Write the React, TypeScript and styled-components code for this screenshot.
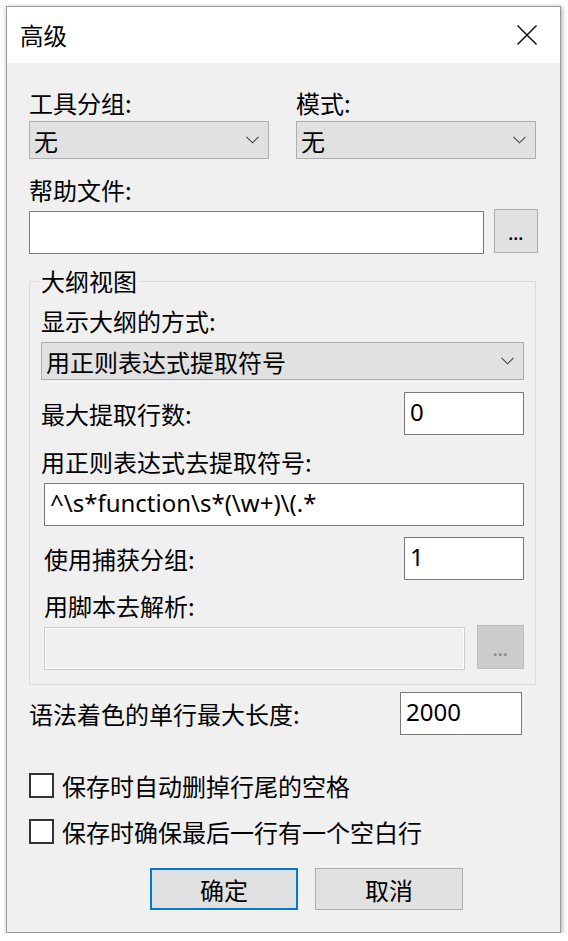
import React from "react";
import styled, { createGlobalStyle } from "styled-components";

const Global = createGlobalStyle`
  html, body { margin: 0; padding: 0; background: #ffffff; }
  body { font-family: "Noto Sans CJK SC", "Noto Sans", sans-serif; color: #000; }
  * { box-sizing: border-box; }
`;

const FS = "24px";

const Window = styled.div`
  margin: 6px 0 0 6px;
  width: 555px;
  height: 927px;
  border: 1px solid #9a9a9a;
  background: #f0f0f0;
  box-shadow: 1px 1px 5px rgba(0, 0, 0, 0.35);
  display: flex;
  flex-direction: column;
`;

const TitleBar = styled.div`
  height: 56px;
  flex: none;
  background: #ffffff;
  display: flex;
  align-items: center;
  justify-content: space-between;
  padding: 0 22px 0 13px;
`;

const Title = styled.div`
  font-size: 23.5px;
  line-height: 30px;
`;

const Body = styled.div`
  padding: 0 24px 0 22px;
  display: flex;
  flex-direction: column;
`;

const Label = styled.div<{ $top?: number; $indent?: number }>`
  font-size: ${FS};
  line-height: 30px;
  height: 30px;
  white-space: nowrap;
  margin-top: ${(p) => p.$top ?? 0}px;
  padding-left: ${(p) => p.$indent ?? 0}px;
`;

const TwoCols = styled.div<{ $top?: number }>`
  display: grid;
  grid-template-columns: 240px 240px;
  column-gap: 27px;
  margin-top: ${(p) => p.$top ?? 0}px;
`;

const Col = styled.div`
  display: flex;
  flex-direction: column;
`;

const Combo = styled.div<{ $top?: number }>`
  height: 38px;
  margin-top: ${(p) => p.$top ?? 0}px;
  background: #e1e1e1;
  border: 1px solid #adadad;
  display: flex;
  align-items: center;
  justify-content: space-between;
  padding: 0 9px 0 4px;
  font-size: ${FS};
  white-space: nowrap;
`;

const Row = styled.div<{ $top?: number; $indent?: number; $right?: number }>`
  display: flex;
  align-items: center;
  justify-content: space-between;
  margin-top: ${(p) => p.$top ?? 0}px;
  padding-left: ${(p) => p.$indent ?? 0}px;
  padding-right: ${(p) => p.$right ?? 0}px;
`;

const BrowseRow = styled.div<{ $top?: number; $indent?: number; $overhang?: number }>`
  display: flex;
  align-items: flex-start;
  margin-top: ${(p) => p.$top ?? 0}px;
  margin-right: ${(p) => -(p.$overhang ?? 0)}px;
  padding-left: ${(p) => p.$indent ?? 0}px;
`;

const TextBox = styled.input<{ $w?: number; $top?: number; $disabled?: boolean }>`
  display: block;
  height: 43px;
  width: ${(p) => (p.$w ? `${p.$w}px` : "auto")};
  flex: ${(p) => (p.$w ? "none" : "1")};
  min-width: 0;
  margin: ${(p) => p.$top ?? 0}px 0 0 0;
  border: 1px solid ${(p) => (p.$disabled ? "#cccccc" : "#7a7a7a")};
  outline: ${(p) => (p.$disabled ? "1px solid #ffffff" : "none")};
  outline-offset: -2px;
  background: ${(p) => (p.$disabled ? "#f0f0f0" : "#ffffff")};
  padding: 0 0 5px 5px;
  font-family: "Noto Sans", "Noto Sans CJK SC", sans-serif;
  font-size: ${FS};
  color: #000;
`;

const DotsButton = styled.div<{ $disabled?: boolean; $w: number; $gap: number }>`
  flex: none;
  width: ${(p) => p.$w}px;
  height: 44px;
  margin-left: ${(p) => p.$gap}px;
  background: ${(p) => (p.$disabled ? "#cccccc" : "#e1e1e1")};
  border: 1px solid ${(p) => (p.$disabled ? "#bfbfbf" : "#adadad")};
  display: flex;
  align-items: flex-end;
  justify-content: center;
  padding-bottom: 10px;
  font-family: "Noto Sans", sans-serif;
  font-size: 16px;
  line-height: 15px;
  letter-spacing: 0.5px;
  font-weight: 700;
  color: ${(p) => (p.$disabled ? "#8d8d8d" : "#000")};
`;

const Group = styled.fieldset`
  margin: 12px 0 0 0;
  padding: 0 11px 14px 11px;
  border: 1px solid #dcdcdc;
  min-width: 0;
  display: flex;
  flex-direction: column;
`;

const Legend = styled.legend`
  font-size: ${FS};
  line-height: 30px;
  padding: 0 2px;
  margin-left: -2px;
`;

const CheckRow = styled.div<{ $top: number }>`
  display: flex;
  align-items: center;
  height: 30px;
  margin-top: ${(p) => p.$top}px;
`;

const CheckBox = styled.span`
  width: 25px;
  height: 25px;
  border: 2px solid #333333;
  background: #ffffff;
  flex: none;
`;

const CheckText = styled.span`
  font-size: ${FS};
  margin-left: 8px;
  white-space: nowrap;
`;

const ButtonBar = styled.div`
  display: flex;
  gap: 17px;
  margin-top: 22px;
  padding-left: 121px;
`;

const Button = styled.div<{ $primary?: boolean }>`
  width: 148px;
  height: 42px;
  background: #e1e1e1;
  border: ${(p) => (p.$primary ? "2px solid #0078d7" : "1px solid #adadad")};
  display: flex;
  align-items: center;
  justify-content: center;
  font-size: ${FS};
`;

const Chevron = () => (
  <svg width="13" height="8" viewBox="0 0 13 8">
    <path d="M0.5 0.8 L6.5 6.8 L12.5 0.8" fill="none" stroke="#444" strokeWidth="1.1" />
  </svg>
);

const CloseIcon = () => (
  <svg width="22" height="22" viewBox="0 0 22 22">
    <path d="M1.5 1.5 L20.5 20.5 M20.5 1.5 L1.5 20.5" stroke="#111" strokeWidth="1.5" fill="none" />
  </svg>
);

export default function App() {
  return (
    <>
      <Global />
      <Window>
        <TitleBar>
          <Title>高级</Title>
          <CloseIcon />
        </TitleBar>
        <Body>
          <TwoCols $top={25}>
            <Col>
              <Label>工具分组:</Label>
              <Combo $top={3}>
                <span>无</span>
                <Chevron />
              </Combo>
            </Col>
            <Col>
              <Label>模式:</Label>
              <Combo $top={3}>
                <span>无</span>
                <Chevron />
              </Combo>
            </Col>
          </TwoCols>

          <Label $top={16}>帮助文件:</Label>
          <BrowseRow $top={4} $overhang={2}>
            <TextBox $top={2} readOnly defaultValue="" />
            <DotsButton $w={44} $gap={10}>...</DotsButton>
          </BrowseRow>

          <Group>
            <Legend>大纲视图</Legend>
            <Label $top={10}>显示大纲的方式:</Label>
            <Combo $top={6}>
              <span>用正则表达式提取符号</span>
              <Chevron />
            </Combo>
            <Row $top={12}>
              <Label>最大提取行数:</Label>
              <TextBox $w={120} readOnly defaultValue="0" />
            </Row>
            <Label $top={12}>用正则表达式去提取符号:</Label>
            <Row $top={6} $indent={3}>
              <TextBox readOnly defaultValue={"^\\s*function\\s*(\\w+)\\(.*"} />
            </Row>
            <Row $top={11} $indent={3}>
              <Label>使用捕获分组:</Label>
              <TextBox $w={120} readOnly defaultValue="1" />
            </Row>
            <Label $top={11} $indent={3}>用脚本去解析:</Label>
            <BrowseRow $top={4} $indent={3}>
              <TextBox $top={2} $disabled readOnly defaultValue="" />
              <DotsButton $w={47} $gap={12} $disabled>...</DotsButton>
            </BrowseRow>
          </Group>

          <Row $top={7} $right={14}>
            <Label>语法着色的单行最大长度:</Label>
            <TextBox $w={122} readOnly defaultValue="2000" />
          </Row>

          <CheckRow $top={35}>
            <CheckBox />
            <CheckText>保存时自动删掉行尾的空格</CheckText>
          </CheckRow>
          <CheckRow $top={16}>
            <CheckBox />
            <CheckText>保存时确保最后一行有一个空白行</CheckText>
          </CheckRow>

          <ButtonBar>
            <Button $primary>确定</Button>
            <Button>取消</Button>
          </ButtonBar>
        </Body>
      </Window>
    </>
  );
}
